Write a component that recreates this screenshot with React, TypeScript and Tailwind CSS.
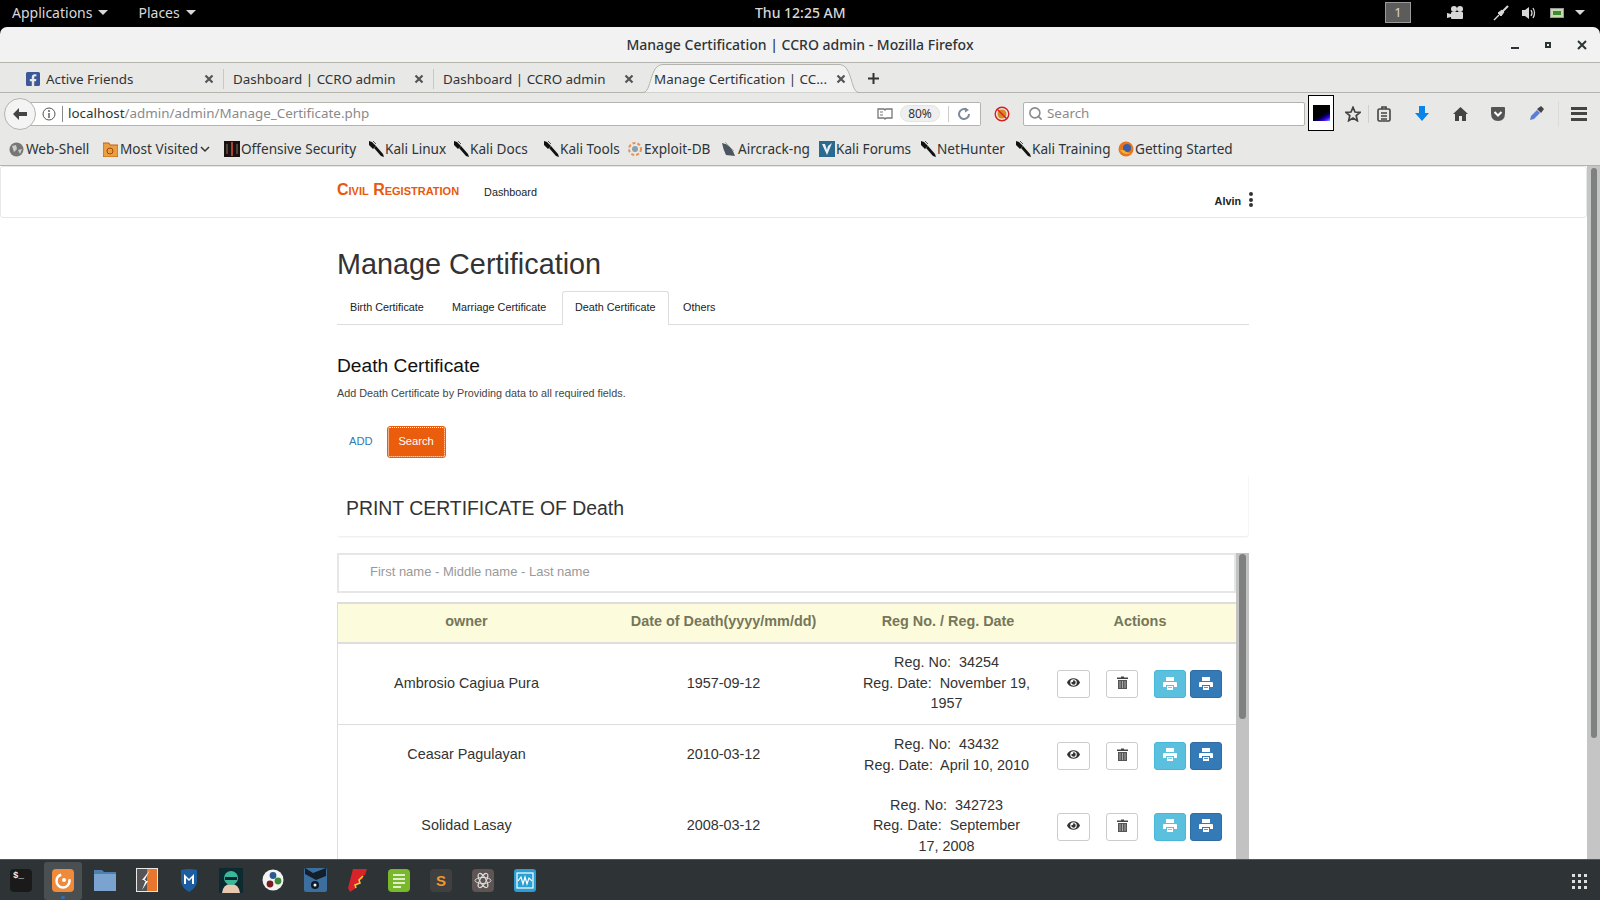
import React from "react";
import { FaEye, FaFacebookSquare } from "react-icons/fa";
import { FiSearch } from "react-icons/fi";

const chromeFont = "font-['Noto_Sans',sans-serif]";

const Knife = () => (
  <svg width="17" height="17" viewBox="0 0 17 17" className="shrink-0">
    <path d="M1 0 L4 1 L8 5 L5 8 L1 4 Z" fill="#111" />
    <path d="M6 7 L8 5 L15 13 L16 16 L13 15 Z" fill="#111" />
    <path d="M5 0 L8 3" stroke="#555" strokeWidth="1" />
  </svg>
);

const PrintIcon = ({ shade }: { shade: string }) => (
  <svg width="14" height="13" viewBox="0 0 14 13" fill="#ffffff">
    <rect x="3" y="0" width="8" height="4" />
    <path d="M1 5 H13 Q14 5 14 6 V10 H11 V8 H3 V10 H0 V6 Q0 5 1 5 Z" />
    <rect x="4" y="9" width="6" height="4" />
    <path d="M5 10.5 H9" stroke={shade} strokeWidth="0.8" />
  </svg>
);

const TrashIcon = () => (
  <svg width="11" height="13" viewBox="0 0 11 13">
    <path d="M4 0.5 H7 V1.5 H11 V3 H0 V1.5 H4 Z" fill="#444" />
    <rect x="1" y="4" width="9" height="9" fill="#555" />
    <path d="M3 5 V12 M5.5 5 V12 M8 5 V12" stroke="#aaa" strokeWidth="1" />
  </svg>
);

const Bookmark = ({ icon, label, width, children }: { icon: React.ReactNode; label: string; width: string; children?: React.ReactNode }) => (
  <div className={`flex items-center shrink-0 ${width}`}>
    <div className="w-[17px] shrink-0 flex items-center">{icon}</div>
    <span>{label}</span>
    {children}
  </div>
);

const CloseX = () => (
  <svg width="10" height="10" viewBox="0 0 10 10" className="shrink-0">
    <path d="M1.5 1.5 L8.5 8.5 M8.5 1.5 L1.5 8.5" stroke="#555" strokeWidth="2.2" />
  </svg>
);

const Tab = ({ label, icon, width, divider }: { label: string; icon?: React.ReactNode; width: string; divider?: boolean }) => (
  <div className={`flex items-center h-full ${width} ${divider ? "border-r border-[#c8c8c6]" : ""}`}>
    {icon}
    <span className="flex-1 truncate">{label}</span>
    <CloseX />
  </div>
);

const TopBar = () => (
  <div className={`h-[27px] bg-black text-[#d8d8d8] text-[14px] flex items-center relative ${chromeFont}`}>
    <div className="flex items-center pl-3 pb-[2px]">
      <span>Applications</span>
      <span className="ml-[6px] w-0 h-0 border-l-[5px] border-r-[5px] border-t-[5px] border-l-transparent border-r-transparent border-t-[#d8d8d8]" />
      <span className="ml-[30px]">Places</span>
      <span className="ml-[6px] w-0 h-0 border-l-[5px] border-r-[5px] border-t-[5px] border-l-transparent border-r-transparent border-t-[#d8d8d8]" />
    </div>
    <div className="absolute left-[755px] top-[2px] font-medium">Thu 12:25 AM</div>
    <div className="ml-auto flex items-center pb-[2px]">
      <div className="w-[26px] h-[21px] border border-[#9a9a9a] bg-[#5c5c5c] text-center leading-[19px] text-[13px]">1</div>
      <svg width="18" height="14" viewBox="0 0 18 14" className="ml-[36px]" fill="#d8d8d8">
        <circle cx="7" cy="3" r="3" />
        <circle cx="13" cy="3" r="3" />
        <rect x="4" y="6" width="12" height="7" rx="1" />
        <path d="M0 7 L4 8 V11 L0 12 Z" />
      </svg>
      <svg width="16" height="16" viewBox="0 0 16 16" className="ml-[28px]" fill="none" stroke="#d8d8d8">
        <path d="M1 15 L6 10" strokeWidth="1.5" />
        <path d="M5 8 L8 11 L11 7 L9 5 Z" fill="#d8d8d8" />
        <path d="M10 6 L15 1" strokeWidth="2" />
      </svg>
      <svg width="16" height="16" viewBox="0 0 16 16" className="ml-[12px]" fill="none" stroke="#d8d8d8">
        <path d="M1 5 H4 L8 2 V14 L4 11 H1 Z" fill="#d8d8d8" stroke="none" />
        <path d="M10 5 Q12 8 10 11 M12 3 Q15 8 12 13" strokeWidth="1.3" />
      </svg>
      <div className="ml-[13px] w-[14px] h-[10px] bg-[#c8d8a8] border border-[#999] relative flex items-center justify-center">
        <div className="w-[8px] h-[4px] bg-[#3a8a3a]" />
      </div>
      <span className="ml-[11px] mr-[15px] w-0 h-0 border-l-[5px] border-r-[5px] border-t-[5px] border-l-transparent border-r-transparent border-t-[#d8d8d8]" />
    </div>
  </div>
);

const TitleBar = () => (
  <div className={`h-[36px] bg-[#f2f2f2] rounded-t-[7px] border-b border-[#b4b4ae] flex items-center relative text-[14px] text-[#2e3436] font-medium ${chromeFont}`}>
    <div className="flex-1 text-center">Manage Certification | CCRO admin - Mozilla Firefox</div>
    <div className="absolute right-[13px] top-[13px] flex items-center gap-[26px]">
      <div className="w-[8px] h-[2px] bg-[#2e3436] mt-[6px]" />
      <div className="w-[6px] h-[6px] border-2 border-[#2e3436]" />
      <svg width="10" height="10" viewBox="0 0 10 10">
        <path d="M1 1 L9 9 M9 1 L1 9" stroke="#2e3436" strokeWidth="2" />
      </svg>
    </div>
  </div>
);

const TabStrip = () => (
  <div className={`h-[30px] bg-[#e8e8e7] border-b border-[#b4b4ae] flex items-center text-[13.4px] text-[#2e3436] ${chromeFont}`}>
    <div className="flex items-center h-[20px] pl-[25px] mt-[3px]">
      <Tab width="w-[199px] pr-[9px]" divider label="Active Friends" icon={<FaFacebookSquare className="text-[#3b5998] mr-[5px]" size={16} />} />
      <Tab width="w-[210px] pl-[9px] pr-[9px]" divider label="Dashboard | CCRO admin" />
      <Tab width="w-[209px] pl-[9px] pr-[9px]" label="Dashboard | CCRO admin" />
    </div>
    <div className="relative w-[216px] h-[30px] flex items-center pl-[11px] pr-[13px] pt-[3px]">
      <svg width="216" height="30" viewBox="0 0 216 30" className="absolute left-0 top-0">
        <path d="M0 29.5 C9 29.5 6 1.5 20 1.5 H196 C210 1.5 207 29.5 216 29.5" fill="#f2f2f2" stroke="#b4b4ae" />
      </svg>
      <span className="relative flex-1 truncate">Manage Certification | CC...</span>
      <span className="relative"><CloseX /></span>
    </div>
    <svg width="13" height="13" viewBox="0 0 13 13" className="ml-[8px] mt-[2px]">
      <path d="M6.5 1 V12 M1 6.5 H12" stroke="#333" strokeWidth="2" />
    </svg>
  </div>
);

const NavBar = () => (
  <div className={`h-[39px] bg-[#e8e8e7] flex items-center relative text-[13.4px] pt-[2px] ${chromeFont}`}>
    <div className="absolute left-[4px] top-[5px] w-[32px] h-[32px] rounded-full bg-[#f4f4f4] border border-[#b4b4ae] flex items-center justify-center z-10">
      <svg width="16" height="14" viewBox="0 0 16 14">
        <path d="M7 1 L1 7 L7 13 V9 H15 V5 H7 Z" fill="#444" />
      </svg>
    </div>
    <div className="ml-[24px] w-[957px] h-[24px] bg-white border border-l-0 border-[#b4b4ae] rounded-r-[2px] flex items-center pl-[18px]">
      <svg width="14" height="14" viewBox="0 0 14 14">
        <circle cx="7" cy="7" r="6" fill="none" stroke="#555" />
        <path d="M7 6 V11 M7 3 V5" stroke="#555" strokeWidth="1.4" />
      </svg>
      <div className="w-px h-[16px] bg-[#888] ml-[6px] mr-[5px]" />
      <span className="text-[#2e3436]">localhost</span>
      <span className="text-[#8a8a8a]">/admin/admin/Manage_Certificate.php</span>
      <svg width="16" height="13" viewBox="0 0 16 13" className="ml-auto">
        <path d="M1 2 H7 L8 3 L9 2 H15 V11 H9 L8 12 L7 11 H1 Z" fill="none" stroke="#777" strokeWidth="1.3" />
        <path d="M3 5 H6 M3 8 H6" stroke="#777" />
      </svg>
      <div className="ml-[7px] w-[40px] h-[17px] rounded-full bg-[#efefef] border border-[#e4e4e4] text-[12px] leading-[15px] text-center text-[#333]">80%</div>
      <div className="ml-[8px] w-px h-[16px] bg-[#ccc]" />
      <svg width="14" height="14" viewBox="0 0 14 14" className="ml-[8px] mr-[9px]" fill="none" stroke="#7d8a99" strokeWidth="2">
        <path d="M12 7 A5 5 0 1 1 9.5 2.7" />
        <path d="M8 0.5 L12 3 L8 5.5 Z" fill="#7d8a99" stroke="none" />
      </svg>
    </div>
    <svg width="16" height="16" viewBox="0 0 16 16" className="ml-[13px]">
      <circle cx="8" cy="8" r="4.5" fill="#d98a1e" />
      <circle cx="8" cy="8" r="6.8" fill="none" stroke="#d62020" strokeWidth="1.4" />
      <path d="M3 3 L13 13" stroke="#d62020" strokeWidth="1.4" />
    </svg>
    <div className="ml-[13px] w-[282px] h-[24px] bg-white border border-[#b4b4ae] rounded-[2px] flex items-center pl-[4px] text-[#8a8a8a]">
      <FiSearch size={15} className="text-[#8a8a8a] mr-[4px]" strokeWidth={2.5} />
      <span>Search</span>
    </div>
    <div className="ml-[3px] w-[26px] h-[36px] border border-black bg-white flex items-center justify-center mt-[-1px]">
      <div className="w-[17px] h-[16px] bg-[linear-gradient(150deg,#000_55%,#000060_70%,#5500ff_85%,#33ddff)]" />
    </div>
    <svg width="16" height="16" viewBox="0 0 24 24" className="ml-[11px]" fill="none" stroke="#444" strokeWidth="2.6">
      <path d="M12 2 L15 9 L22.5 9.6 L16.8 14.5 L18.5 22 L12 18 L5.5 22 L7.2 14.5 L1.5 9.6 L9 9 Z" />
    </svg>
    <div className="w-px h-[18px] bg-[#cfcfcd] ml-[7px]" />
    <svg width="14" height="16" viewBox="0 0 14 16" className="ml-[8px]" fill="none" stroke="#444" strokeWidth="1.6">
      <rect x="1" y="3" width="12" height="12" rx="1.5" />
      <path d="M5 3 V1 H9 V3 M4 7 H10 M4 10 H10 M4 13 H10" />
    </svg>
    <svg width="14" height="15" viewBox="0 0 14 15" className="ml-[24px]">
      <path d="M4 0 H10 V7 H14 L7 15 L0 7 H4 Z" fill="#0a84e8" />
    </svg>
    <svg width="15" height="14" viewBox="0 0 15 14" className="ml-[24px]">
      <path d="M7.5 0 L15 7 H13 V14 H9 V9 H6 V14 H2 V7 H0 Z" fill="#444" />
    </svg>
    <svg width="14" height="14" viewBox="0 0 14 14" className="ml-[23px]">
      <path d="M1 0 H13 Q14 0 14 1 V6 Q14 14 7 14 Q0 14 0 6 V1 Q0 0 1 0 Z" fill="#555" />
      <path d="M3.5 5 L7 8.5 L10.5 5" fill="none" stroke="#fff" strokeWidth="2" />
    </svg>
    <svg width="15" height="15" viewBox="0 0 15 15" className="ml-[24px]">
      <path d="M1 14 L2 10 L8 4 L11 7 L5 13 Z" fill="#5b7fd8" />
      <path d="M8 3 L12 7 L15 3 L12 0 Z" fill="#444" />
    </svg>
    <div className="w-px h-[26px] bg-[#dcdcda] ml-[14px]" />
    <div className="ml-[12px] w-[16px] flex flex-col gap-[2.5px]">
      <div className="h-[3px] bg-[#444]" />
      <div className="h-[3px] bg-[#444]" />
      <div className="h-[3px] bg-[#444]" />
    </div>
  </div>
);

const BookmarksBar = () => (
  <div className={`h-[34px] bg-[#e8e8e7] border-b border-[#b4b4ae] flex items-center pl-[9px] pt-[2px] text-[13.6px] text-[#2e3436] ${chromeFont}`}>
    <Bookmark
      width="w-[94px]"
      label="Web-Shell"
      icon={
        <svg width="15" height="15" viewBox="0 0 15 15">
          <circle cx="7.5" cy="7.5" r="7" fill="#777" />
          <path d="M3 4 L7 3 L8 7 L5 10 Z M9 8 L13 7 L11 12 Z" fill="#ccc" />
        </svg>
      }
    />
    <Bookmark
      width="w-[121px]"
      label="Most Visited"
      icon={
        <svg width="15" height="16" viewBox="0 0 15 16">
          <path d="M0 2 H6 L7 4 H15 V16 H0 Z" fill="#e8a040" stroke="#c06010" />
          <circle cx="7" cy="10" r="3" fill="none" stroke="#b04010" />
        </svg>
      }
    >
      <svg width="10" height="7" viewBox="0 0 10 7" className="ml-[2px]">
        <path d="M1 1 L5 5 L9 1" fill="none" stroke="#333" strokeWidth="1.5" />
      </svg>
    </Bookmark>
    <Bookmark
      width="w-[144px]"
      label="Offensive Security"
      icon={
        <svg width="16" height="16" viewBox="0 0 16 16">
          <rect width="16" height="16" fill="#1a1010" />
          <rect x="7" y="1" width="2" height="14" fill="#b04030" />
          <path d="M3 3 V13 M13 3 V13" stroke="#776" />
        </svg>
      }
    />
    <Bookmark width="w-[85px]" label="Kali Linux" icon={<Knife />} />
    <Bookmark width="w-[90px]" label="Kali Docs" icon={<Knife />} />
    <Bookmark width="w-[84px]" label="Kali Tools" icon={<Knife />} />
    <Bookmark
      width="w-[94px]"
      label="Exploit-DB"
      icon={
        <svg width="16" height="16" viewBox="0 0 16 16">
          <circle cx="8" cy="8" r="6" fill="none" stroke="#e89050" strokeWidth="2" strokeDasharray="3 2" />
          <circle cx="8" cy="8" r="3" fill="#8aa0b0" />
        </svg>
      }
    />
    <Bookmark
      width="w-[98px]"
      label="Aircrack-ng"
      icon={
        <svg width="16" height="16" viewBox="0 0 16 16">
          <path d="M1 2 Q10 3 14 15 L5 14 Q2 8 1 2 Z" fill="#4a5560" />
          <path d="M4 1 L13 10" stroke="#a0b0c0" />
        </svg>
      }
    />
    <Bookmark
      width="w-[101px]"
      label="Kali Forums"
      icon={
        <svg width="16" height="16" viewBox="0 0 16 16">
          <rect width="16" height="16" fill="#2a6a90" />
          <path d="M3 3 L8 14 L13 2 L9 5 L8 9 L6 3 Z" fill="#e8f0f5" />
        </svg>
      }
    />
    <Bookmark width="w-[95px]" label="NetHunter" icon={<Knife />} />
    <Bookmark width="w-[103px]" label="Kali Training" icon={<Knife />} />
    <Bookmark
      width="w-[120px]"
      label="Getting Started"
      icon={
        <svg width="16" height="16" viewBox="0 0 16 16">
          <circle cx="8" cy="8" r="7.5" fill="#e8741c" />
          <circle cx="9" cy="7" r="4" fill="#3a5fa8" />
          <path d="M2 9 Q6 15 13 12 Q8 12 6 9 Z" fill="#f4b030" />
        </svg>
      }
    />
  </div>
);

const IconBtn = ({ children, width }: { children: React.ReactNode; width: string }) => (
  <button className={`${width} h-[28px] rounded-[3px] border border-[#cccccc] bg-white text-[#333] flex items-center justify-center pb-[3px]`}>
    {children}
  </button>
);

const rows = [
  { owner: "Ambrosio Cagiua Pura", date: "1957-09-12", lines: ["Reg. No:  34254", "Reg. Date:  November 19,", "1957"], h: "h-[81px] border-b border-[#dddddd]" },
  { owner: "Ceasar Pagulayan", date: "2010-03-12", lines: ["Reg. No:  43432", "Reg. Date:  April 10, 2010"], h: "h-[61px]" },
  { owner: "Solidad Lasay", date: "2008-03-12", lines: ["Reg. No:  342723", "Reg. Date:  September", "17, 2008"], h: "h-[81px]" },
];

const CertTable = () => (
  <div className="flex h-[306px] overflow-hidden">
    <div className="w-[899px]">
      <div className="h-[40px] border-2 border-[#e6e6e6] flex items-center pl-[31px] pb-[2px] text-[13px] text-[#999999]">
        First name - Middle name - Last name
      </div>
      <div className="mt-[9px] border-l border-[#dddddd]">
        <div className="h-[42px] bg-[#fcfcdc] border-y-2 border-[#dddddd] grid grid-cols-[257px_257px_192px_1fr] items-center text-center text-[14.4px] font-bold text-[#76765a] pb-[2px]">
          <div>owner</div>
          <div>Date of Death(yyyy/mm/dd)</div>
          <div>Reg No. / Reg. Date</div>
          <div>Actions</div>
        </div>
        {rows.map((r) => (
          <div key={r.owner} className={`grid grid-cols-[257px_257px_192px_1fr] items-center text-center text-[14.4px] leading-[20.5px] text-[#333333] ${r.h}`}>
            <div className="pb-[2px]">{r.owner}</div>
            <div className="pb-[2px]">{r.date}</div>
            <div className="pb-[2px] pr-[3px] whitespace-pre-wrap">
              {r.lines.map((l) => (
                <div key={l}>{l}</div>
              ))}
            </div>
            <div className="flex items-center pl-[13px]">
              <IconBtn width="w-[33px]"><FaEye size={13} /></IconBtn>
              <div className="ml-[16px]"><IconBtn width="w-[32px]"><TrashIcon /></IconBtn></div>
              <button className="ml-[16px] w-[32px] h-[28px] rounded-[3px] bg-[#5bc0de] border border-[#46b8da] flex items-center justify-center pb-[2px]"><PrintIcon shade="#5bc0de" /></button>
              <button className="ml-[4px] w-[32px] h-[28px] rounded-[3px] bg-[#337ab7] border border-[#2e6da4] flex items-center justify-center pb-[2px]"><PrintIcon shade="#337ab7" /></button>
            </div>
          </div>
        ))}
      </div>
    </div>
    <div className="w-[13px] bg-[#c1c2c1] pt-px pl-[3px]">
      <div className="w-[7px] h-[165px] rounded-full bg-[#7f8080]" />
    </div>
  </div>
);

const PageContent = () => (
  <div className="flex-1 flex overflow-hidden bg-white font-['Liberation_Sans',sans-serif]">
    <div className="flex-1 overflow-hidden">
      <div className="h-[52px] border border-[#e7e7e7] rounded-[3px] bg-white flex pl-[336px] pr-[333px] text-[10.8px] text-[#222]">
        <div className="pt-[14px] text-[16px] font-bold text-[#e8590c] [font-variant:small-caps] leading-[18px]">Civil Registration</div>
        <div className="ml-[25px] pt-[17px]">Dashboard</div>
        <div className="ml-auto pt-[26px] font-bold">Alvin</div>
        <div className="ml-[8px] pt-[25px] flex flex-col gap-[1.5px]">
          <div className="w-[4px] h-[4px] rounded-full bg-[#333]" />
          <div className="w-[4px] h-[4px] rounded-full bg-[#333]" />
          <div className="w-[4px] h-[4px] rounded-full bg-[#333]" />
        </div>
      </div>
      <div className="w-[912px] ml-[337px]">
        <h1 className="mt-[28px] text-[28.8px] leading-[36px] text-[#333333]">Manage Certification</h1>
        <div className="mt-[9px] h-[34px] flex border-b border-[#dddddd] text-[10.8px] text-[#222]">
          <div className="w-[102px] pl-[13px] pt-[8px]">Birth Certificate</div>
          <div className="w-[123px] pl-[13px] pt-[8px]">Marriage Certificate</div>
          <div className="w-[107px] h-[34px] pl-[12px] pt-[7px] bg-white border border-b-0 border-[#dddddd] rounded-t-[3px]">Death Certificate</div>
          <div className="pl-[14px] pt-[8px]">Others</div>
        </div>
        <h3 className="mt-[29px] text-[19.2px] leading-[23px] text-[#111]">Death Certificate</h3>
        <p className="mt-[9px] text-[10.8px] leading-[14px] text-[#444]">Add Death Certificate by Providing data to all required fields.</p>
        <div className="mt-[27px] flex items-center text-[11.2px]">
          <span className="ml-[12px] text-[#337ab7] mb-[2px]">ADD</span>
          <div className="ml-[15px] w-[57px] h-[30px] rounded-[2px] bg-[#e95d0c] border border-dotted border-white outline outline-1 outline-[#e95d0c] text-white flex items-center justify-center pb-[1px]">Search</div>
        </div>
        <div className="mt-[18px] h-[62px] border-b border-[#f0f0f0] border-r border-r-[#f5f5f5] rounded-[3px] shadow-[0_1px_1px_rgba(0,0,0,0.03)] flex items-center pl-[9px] pt-[6px] text-[19.4px] text-[#333333]">
          PRINT CERTIFICATE OF Death
        </div>
        <div className="mt-[16px]">
          <CertTable />
        </div>
      </div>
    </div>
    <div className="w-[13px] bg-[#c4c5c4] pl-[4px] pt-[2px]">
      <div className="w-[6px] h-[570px] rounded-full bg-[#7f8080]" />
    </div>
  </div>
);

const DockIcon = ({ children, active }: { children: React.ReactNode; active?: boolean }) => (
  <div className="w-[42px] h-[38px] flex items-center justify-center relative">
    {active && <div className="absolute left-[2px] top-0 w-[38px] h-[38px] bg-[#4a5052] rounded-[3px]" />}
    {active && <div className="absolute left-[19px] bottom-[1px] w-[4px] h-[3px] rounded-full bg-[#2a6fc0]" />}
    <div className="relative mb-[2px]">{children}</div>
  </div>
);

const Dock = () => (
  <div className="h-[41px] bg-[#2e3436] flex items-end border-t border-[#555]">
    <DockIcon>
      <div className="w-[22px] h-[23px] rounded-[4px] bg-[#1a1a1a] text-[#eee] text-[9px] leading-[14px] pl-[3px] font-['Liberation_Mono',monospace] font-bold">$_</div>
    </DockIcon>
    <DockIcon active>
      <svg width="22" height="23" viewBox="0 0 22 23">
        <rect width="22" height="23" rx="4" fill="#ee8a3c" />
        <circle cx="11" cy="12" r="6.5" fill="none" stroke="#fff" strokeWidth="2.5" strokeDasharray="28 10" />
        <circle cx="12" cy="11" r="2" fill="#fff" />
      </svg>
    </DockIcon>
    <DockIcon>
      <svg width="22" height="22" viewBox="0 0 22 22">
        <path d="M0 1 H8 L10 3 H22 V6 H0 Z" fill="#4f7fac" />
        <rect y="5" width="22" height="17" fill="#7ba3cf" />
      </svg>
    </DockIcon>
    <DockIcon>
      <svg width="22" height="24" viewBox="0 0 22 24">
        <rect width="22" height="24" fill="#e8e8e8" />
        <rect x="1" y="1" width="10" height="22" fill="#555" />
        <rect x="11" y="1" width="10" height="22" fill="#e8762c" />
        <path d="M14 2 L6 12 H10 L6 22 L12 13 H8 Z" fill="#fff" />
      </svg>
    </DockIcon>
    <DockIcon>
      <svg width="18" height="24" viewBox="0 0 18 24">
        <path d="M1 2 Q9 0 17 2 V14 Q16 20 9 24 Q2 20 1 14 Z" fill="#1c5ea0" />
        <path d="M4 16 V6 L9 11 L14 6 V16 H12 V10 L9 13 L6 10 V16 Z" fill="#fff" />
      </svg>
    </DockIcon>
    <DockIcon>
      <svg width="24" height="25" viewBox="0 0 24 25">
        <rect width="24" height="25" fill="#0c2a30" />
        <path d="M3 25 Q4 16 12 16 Q20 16 21 25 Z" fill="#e8c8b0" />
        <circle cx="12" cy="10" r="7" fill="#3ab89a" />
        <rect x="6" y="9" width="12" height="3" fill="#123" />
      </svg>
    </DockIcon>
    <DockIcon>
      <svg width="22" height="22" viewBox="0 0 22 22">
        <circle cx="11" cy="11" r="10.5" fill="#f4f4f4" />
        <circle cx="11" cy="6.5" r="3.4" fill="#2a5a90" />
        <circle cx="16" cy="12" r="3.4" fill="#3a8a3a" />
        <circle cx="8" cy="15" r="3.4" fill="#7a1c20" />
      </svg>
    </DockIcon>
    <DockIcon>
      <svg width="23" height="24" viewBox="0 0 23 24">
        <rect width="23" height="24" rx="2" fill="#3d6f9e" />
        <path d="M1 0 L9 5 L22 0 V8 L12 12 L1 6 Z" fill="#13202c" />
        <circle cx="11" cy="17" r="4" fill="#0e1a24" />
        <circle cx="11" cy="17" r="1.5" fill="#fff" />
      </svg>
    </DockIcon>
    <DockIcon>
      <svg width="19" height="25" viewBox="0 0 19 25">
        <path d="M5 1 H19 L17 7 L14 8 L15 11 L11 12 L12 15 L7 17 L8 20 L2 24 L0 20 Z" fill="#d8232a" />
        <path d="M15 8 L11 12 L12 15 L7 17 L8 20" fill="none" stroke="#f6d32d" strokeWidth="1.5" />
      </svg>
    </DockIcon>
    <DockIcon>
      <svg width="22" height="23" viewBox="0 0 22 23">
        <rect width="22" height="23" rx="4" fill="#78b82a" />
        <path d="M5 6 H17 M5 10 H17 M5 14 H17 M5 18 H13" stroke="#fff" strokeWidth="1.5" />
      </svg>
    </DockIcon>
    <DockIcon>
      <div className="w-[22px] h-[23px] rounded-[4px] bg-[#404040] text-[#f0962e] text-[15px] font-bold leading-[23px] text-center font-['Liberation_Sans',sans-serif]">S</div>
    </DockIcon>
    <DockIcon>
      <svg width="22" height="23" viewBox="0 0 22 23" fill="none" stroke="#ddd">
        <rect width="22" height="23" rx="4" fill="#5e5454" stroke="none" />
        <ellipse cx="11" cy="11.5" rx="8" ry="3" />
        <ellipse cx="11" cy="11.5" rx="8" ry="3" transform="rotate(60 11 11.5)" />
        <ellipse cx="11" cy="11.5" rx="8" ry="3" transform="rotate(120 11 11.5)" />
      </svg>
    </DockIcon>
    <DockIcon>
      <svg width="22" height="23" viewBox="0 0 22 23" fill="none">
        <rect width="22" height="23" rx="3" fill="#2a9fd4" />
        <rect x="3" y="4" width="16" height="15" stroke="#fff" strokeWidth="1.2" />
        <path d="M4 12 L7 8 L9 15 L11 8 L13 15 L15 9 L18 12" stroke="#fff" strokeWidth="1.2" />
      </svg>
    </DockIcon>
    <div className="ml-auto mr-[13px] mb-[11px] grid grid-cols-3 gap-[3px]">
      {[0, 1, 2, 3, 4, 5, 6, 7, 8].map((d) => (
        <div key={d} className="w-[3px] h-[3px] bg-[#e0e0e0]" />
      ))}
    </div>
  </div>
);

const App = () => {
  return (
    <div className="w-[1600px] h-[900px] flex flex-col overflow-hidden bg-black">
      <TopBar />
      <TitleBar />
      <TabStrip />
      <NavBar />
      <BookmarksBar />
      <PageContent />
      <Dock />
    </div>
  );
};

export default App;
